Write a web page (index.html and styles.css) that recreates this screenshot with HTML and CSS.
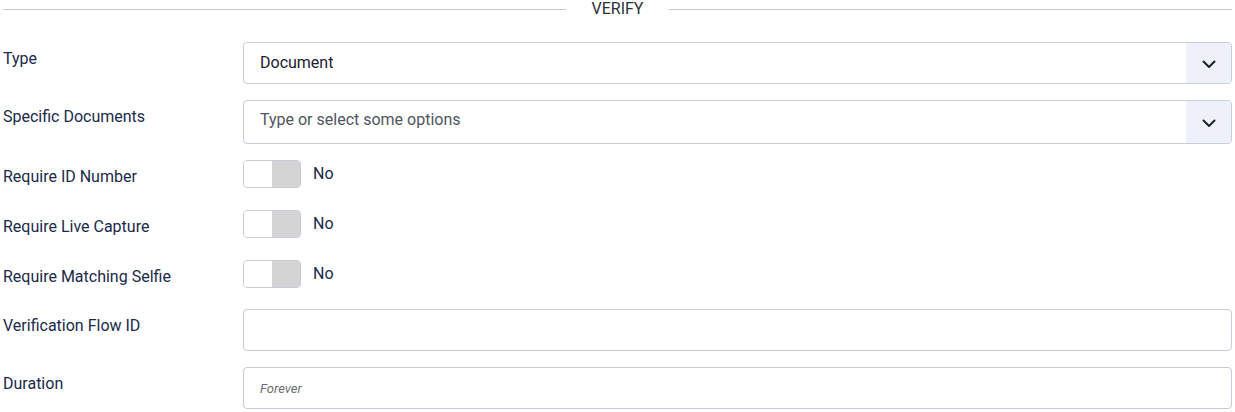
FILE: index.html
```html
<!DOCTYPE html>
<html>
<head>
<meta charset="utf-8">
<link rel="stylesheet" href="styles.css">
</head>
<body>
<div class="form">
  <div class="divider"><span class="line"></span><span class="title">VERIFY</span><span class="line"></span></div>

  <div class="row r-type">
    <div class="label">Type</div>
    <div class="select">
      <span class="value">Document</span>
      <span class="arrow"><svg width="14" height="9" viewBox="0 0 14 9"><path d="M1.5 1.5 L7 7 L12.5 1.5" fill="none" stroke="#1b2130" stroke-width="2" stroke-linecap="round" stroke-linejoin="round"/></svg></span>
    </div>
  </div>

  <div class="row r-spec">
    <div class="label">Specific Documents</div>
    <div class="select tall">
      <span class="value placeholder">Type or select some options</span>
      <span class="arrow"><svg width="14" height="9" viewBox="0 0 14 9"><path d="M1.5 1.5 L7 7 L12.5 1.5" fill="none" stroke="#1b2130" stroke-width="2" stroke-linecap="round" stroke-linejoin="round"/></svg></span>
    </div>
  </div>

  <div class="row r-toggle first">
    <div class="label">Require ID Number</div>
    <div class="toggle-wrap"><span class="toggle"><span class="on"></span><span class="off"></span></span><span class="tval">No</span></div>
  </div>

  <div class="row r-toggle">
    <div class="label">Require Live Capture</div>
    <div class="toggle-wrap"><span class="toggle"><span class="on"></span><span class="off"></span></span><span class="tval">No</span></div>
  </div>

  <div class="row r-toggle">
    <div class="label">Require Matching Selfie</div>
    <div class="toggle-wrap"><span class="toggle"><span class="on"></span><span class="off"></span></span><span class="tval">No</span></div>
  </div>

  <div class="row r-flow">
    <div class="label">Verification Flow ID</div>
    <div class="input"></div>
  </div>

  <div class="row r-dur">
    <div class="label">Duration</div>
    <div class="input"><span class="ph">Forever</span></div>
  </div>
</div>
</body>
</html>
```

FILE: styles.css
```css
* { box-sizing: border-box; }
html, body { margin: 0; padding: 0; background: #fff; }
body { font-family: Roboto, "Liberation Sans", sans-serif; color: #1a2a4a; }
.form { padding: 0 3px 0 3px; }

.divider { display: flex; align-items: center; height: 18px; gap: 26px; }
.divider .line { flex: 1; height: 1px; background: #c9c9c9; }
.divider .title { font-size: 16px; color: #2b2f3a; line-height: 18px; }

.row { display: grid; grid-template-columns: 240px 1fr; }
.label { font-size: 16px; color: #1a2a4a; line-height: 18px; }

.r-type { margin-top: 24px; }
.r-type .label { padding-top: 8px; }
.r-spec { margin-top: 16px; }
.r-spec .label { padding-top: 8px; }

.select { display: flex; height: 42px; border: 1px solid #c6ccd8; border-radius: 4px; overflow: hidden; }
.select.tall { height: 44px; }
.select .value { flex: 1; padding-left: 16px; display: flex; align-items: center; font-size: 16px; color: #1b2130; padding-bottom: 1px; }
.select .value.placeholder { color: #50555f; padding-bottom: 5px; }
.select .arrow { width: 45px; background: #eef1fa; display: flex; align-items: center; justify-content: center; padding-top: 2px; }

.r-toggle { margin-top: 22px; height: 28px; }
.r-toggle.first { margin-top: 16px; }
.r-toggle .label { padding-top: 8px; }
.toggle-wrap { display: flex; align-items: center; gap: 12px; height: 28px; }
.toggle { display: flex; width: 58px; height: 28px; border: 1px solid #c7cdd8; border-radius: 4px; overflow: hidden; }
.toggle .on { width: 28px; background: #fff; }
.toggle .off { flex: 1; background: #d4d4d4; }
.tval { font-size: 16px; color: #1a2a4a; padding-bottom: 2px; }

.input { height: 42px; border: 1px solid #c6ccd8; border-radius: 4px; display: flex; align-items: center; padding-left: 16px; }
.r-flow { margin-top: 21px; }
.r-flow .label { padding-top: 8px; }
.r-dur { margin-top: 16px; }
.r-dur .label { padding-top: 8px; }
.ph { font-size: 13px; font-style: italic; color: #6b6f78; }
```
